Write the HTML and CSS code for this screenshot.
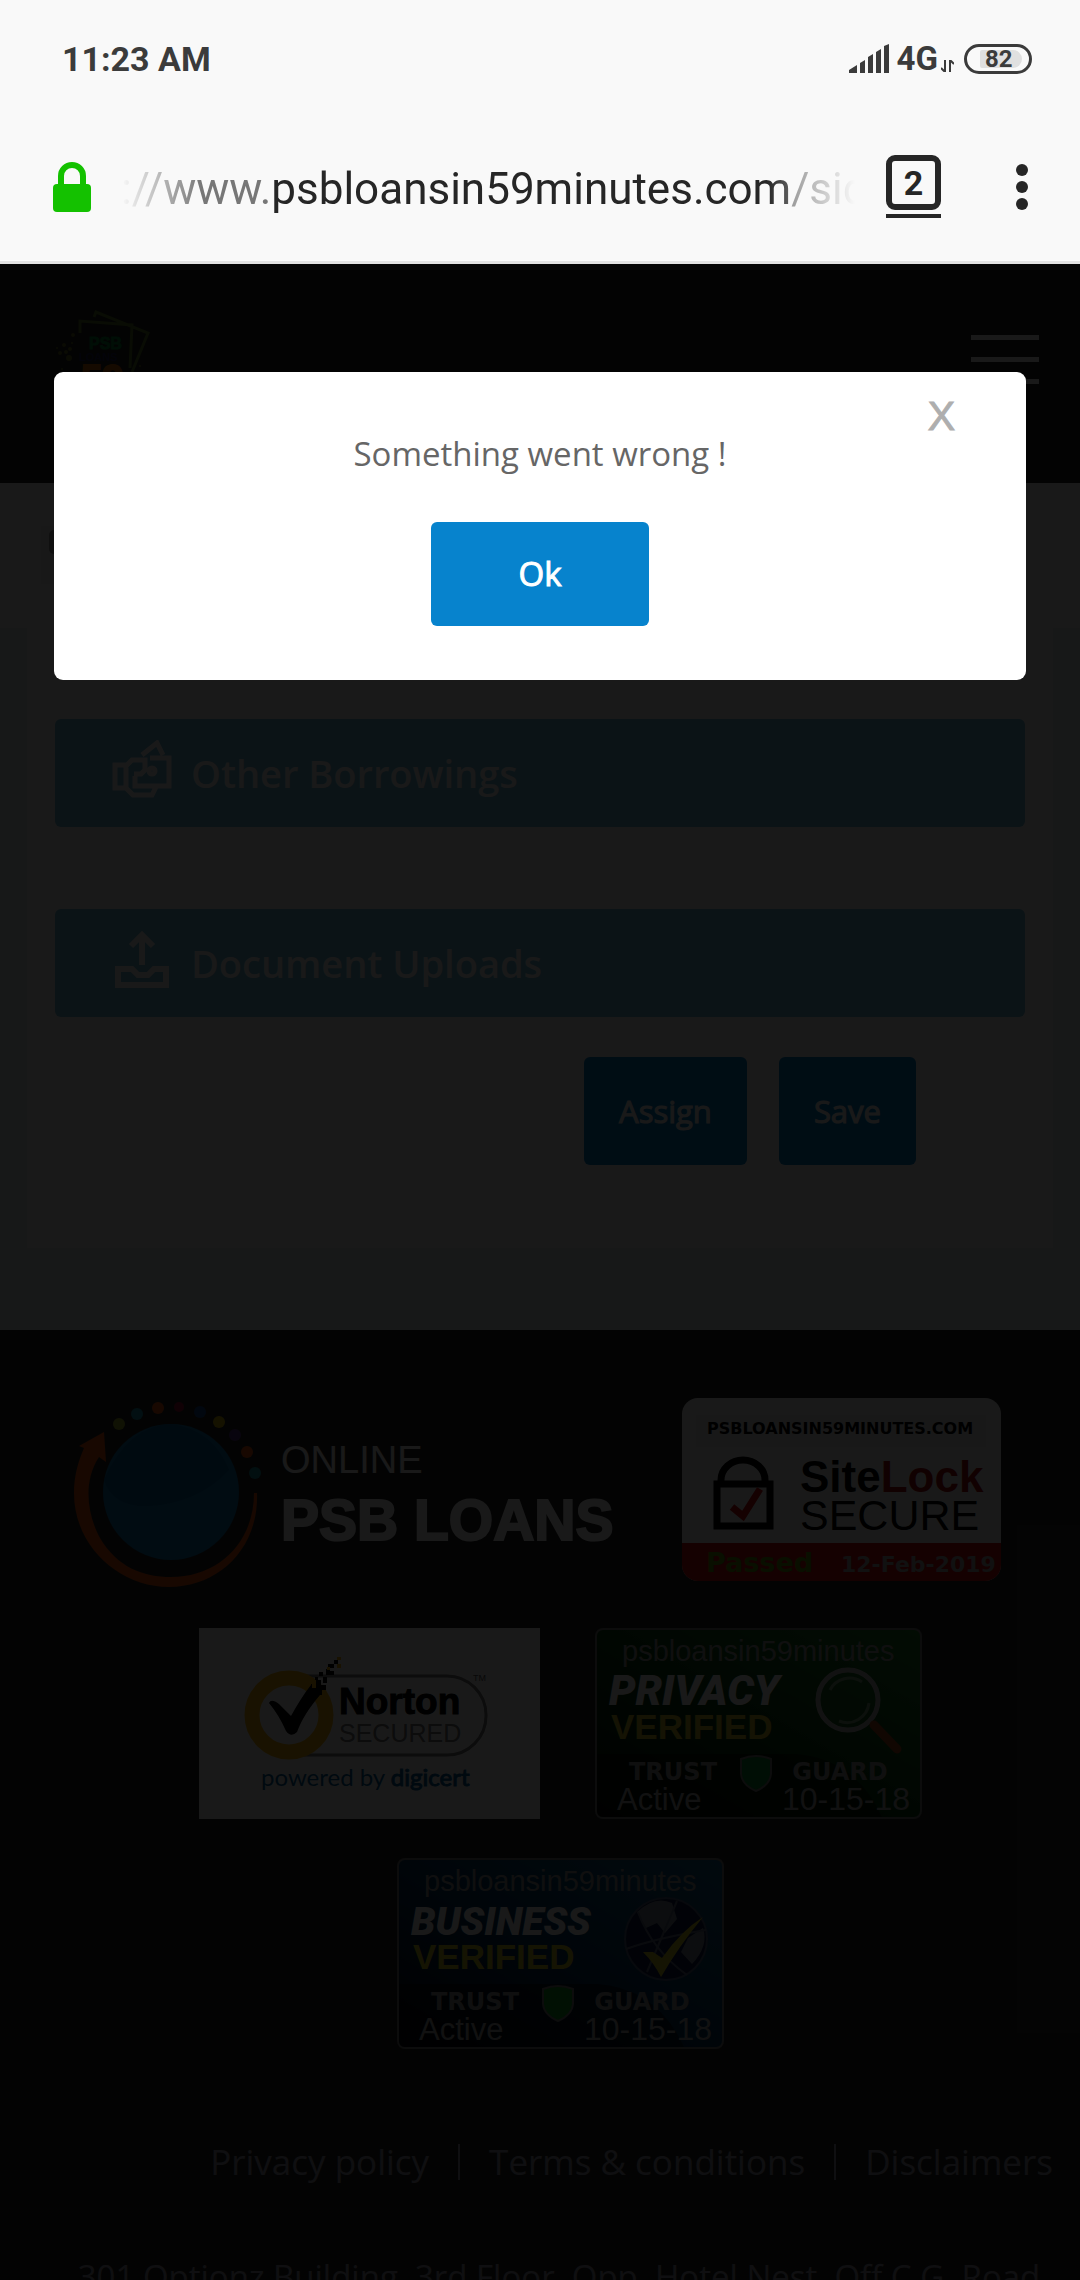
FILE: index.html
```html
<!DOCTYPE html>
<html lang="en">
<head>
<meta charset="utf-8">
<meta name="viewport" content="width=device-width, initial-scale=1">
<title>PSB Loans in 59 Minutes</title>
<link rel="stylesheet" href="styles.css">
</head>
<body>
<div class="shell">
  <div class="chrome">
    <div class="status">
      <span class="clock">11:23 AM</span>
      <div class="signals">
        <svg width="40" height="29" viewBox="0 0 40 29" fill="#3b3b3b" aria-hidden="true"><path d="M0 26L8 21V29H0zM11 19L16 16V29H11zM19 13L24 10V29H19zM27 8L32 5V29H27zM35 2L40 0V29H35z"/></svg>
        <span class="network">4G</span>
        <svg class="traffic" width="13" height="12" viewBox="0 0 13 12" fill="none" stroke="#3b3b3b" stroke-width="2" aria-hidden="true"><path d="M4 0V12L0 8M9 12V0L13 4"/></svg>
        <span class="battery"><span class="charge">82</span></span>
      </div>
    </div>
    <div class="toolbar">
      <svg width="38" height="50" viewBox="0 0 38 50" aria-label="Secure connection"><rect y="22" width="38" height="28" rx="4" fill="#14c100"/><path d="M8 24V14a11 11 0 0 1 22 0V24" fill="none" stroke="#14c100" stroke-width="6"/></svg>
      <div class="address"><span class="url"><i>://www.</i>psbloansin59minutes.com<i>/sid</i></span></div>
      <button class="tabs" type="button" aria-label="Open tabs"><span class="tab-count">2</span></button>
      <button class="more" type="button" aria-label="Menu"><span></span><span></span><span></span></button>
    </div>
  </div>

  <div class="page">
    <header class="site-header">
      <svg width="100" height="110" viewBox="0 0 100 110" aria-label="PSB Loans in 59 minutes">
        <g fill="none" stroke="#5a7a2a" stroke-width="3"><path d="M42 7L44 2 96 23 80 62M28 23V11L80 15 78 58"/></g>
        <g fill="#6b7020"><circle cx="21" cy="25" r="2"/><circle cx="12" cy="35" r="2"/><circle cx="18" cy="39" r="2"/><circle cx="8" cy="43" r="2"/><circle cx="17" cy="48" r="3"/><circle cx="14" cy="42" r="2"/><circle cx="10" cy="59" r="1"/><circle cx="88" cy="56" r="1"/><circle cx="5" cy="38" r="1"/><circle cx="20" cy="33" r="1"/></g>
        <text class="heavy" x="37" y="39" font-size="16" fill="#008a3c" stroke="#008a3c">PSB</text>
        <text class="heavy" x="27" y="51" font-size="11" fill="#202060">LOANS</text>
        <text class="heavy" x="29" y="82" font-size="38" fill="#d86a00" stroke="#d86a00" stroke-width="2">59</text>
      </svg>
      <button class="burger" type="button" aria-label="Navigation"><span></span><span></span><span></span></button>
    </header>
    <div class="title-bar"><div class="title-icon"><span></span></div></div>
    <main class="content">
      <section class="card">
        <a class="section" href="#borrowings">
          <svg width="60" height="58" viewBox="0 0 60 58" fill="none" stroke="#fff" stroke-width="5" aria-hidden="true"><path d="M30 15L45 3 51 15M38 18H57V46H23V36M3 25H14V48H3zM14 26L20 20H33V30L29 34H22M14 48L21 55H40L44 47"/><circle cx="40" cy="31" r="3"/></svg>
          <span>Other Borrowings</span>
        </a>
        <a class="section" href="#uploads">
          <svg width="60" height="58" viewBox="0 0 60 58" fill="none" stroke="#fff" stroke-width="6" aria-hidden="true"><path d="M30 35V5M19 16L30 5 41 16M6 39H20L26 45H36L42 39H54V55H6z"/></svg>
          <span>Document Uploads</span>
        </a>
        <div class="actions">
          <button type="button">Assign</button>
          <button type="button">Save</button>
        </div>
      </section>
    </main>
    <footer class="site-footer">
      <div class="badges">
        <div class="badge-row badge-row-first">
          <svg width="559" height="191" viewBox="0 0 559 191" aria-label="Online PSB Loans">
            <circle cx="103" cy="94" r="68" fill="#0b78b5"/>
            <path d="M36 82Q45 109 80 108Q130 105 161 72Q145 32 103 26Q60 28 36 82" fill="#07528f" opacity=".5"/>
            <path d="M11 48L36 34 38 64 31 59C14 85 20 118 32 140C49 169 75 179 103 179C150 179 186 145 186 95H189C191 151 150 189 101 189C52 189 6 149 6 95C6 78 10 64 16 50Z" fill="#f0540e"/>
            <circle cx="51" cy="26" r="6" fill="#a7b52a"/><circle cx="69" cy="16" r="6" fill="#1499b5"/><circle cx="90" cy="10" r="6" fill="#f0540e"/><circle cx="111" cy="9" r="5" fill="#a01038"/><circle cx="132" cy="14" r="6" fill="#10489b"/><circle cx="151" cy="24" r="6" fill="#d7b800"/><circle cx="167" cy="37" r="6" fill="#54308c"/><circle cx="179" cy="54" r="6" fill="#f0540e"/><circle cx="187" cy="75" r="6" fill="#1499a5"/>
            <text class="plain" x="213" y="75" font-size="38" fill="#fff">ONLINE</text>
            <text class="heavy" x="213" y="142" font-size="57" fill="#fff" stroke="#fff" stroke-width="2">PSB LOANS</text>
          </svg>
          <svg width="319" height="183" viewBox="0 0 319 183" aria-label="SiteLock Secure">
            <rect width="319" height="183" rx="16" fill="#fff"/><rect x="14" y="17" width="290" height="32" fill="#eee"/>
            <path d="M0 145H319V167a16 16 0 0 1-16 16H16a16 16 0 0 1-16-16z" fill="#cf1010"/>
            <text class="wide" x="25" y="36" font-size="16" fill="#000">PSBLOANSIN59MINUTES.COM</text>
            <path d="M35 86H88V128H35zM39 84V82a22 20 0 0 1 44 0V84" fill="none" stroke="#000" stroke-width="7"/>
            <path d="M50 109L61 118 78 91" fill="none" stroke="#cf1010" stroke-width="7"/>
            <text class="heavy" x="118" y="94" font-size="44" fill="#000">Site<tspan fill="#b00c10">Lock</tspan></text>
            <text class="plain" x="118" y="132" font-size="43" fill="#000">SECURE</text>
            <text class="wide" x="24" y="174" font-size="27" fill="#5a9a00">Passed</text>
            <text class="wide" x="159" y="174" font-size="22" fill="#aaa">12-Feb-2019</text>
          </svg>
        </div>
        <div class="badge-row">
          <svg width="341" height="191" viewBox="0 0 341 191" aria-label="Norton Secured, powered by digicert">
            <rect width="341" height="191" fill="#fff"/>
            <rect x="50" y="48" width="237" height="79" rx="39" fill="none" stroke="#777" stroke-width="3"/>
            <circle cx="90" cy="87" r="37" fill="#fff" stroke="#fdb913" stroke-width="15"/>
            <path d="M70 75Q72 70 80 76L92 88C98 77 104 67 112 57L121 67C110 80 103 91 98 104Q92 110 87 103Q80 87 70 75Z" fill="#000"/>
            <path d="M112 56h5v-4h5v5h5v5h-4v5h-8v-5h-3zM120 44h4v4h-4zM127 41h4v6h-4zM124 49h4v6h-4zM129 36h6v4h-6zM135 32h4v4h-4zM131 43h4v4h-4zM116 49h3v3h-3z"/>
            <path d="M138 29h4v3h-4zM138 36h4v4h-4zM128 39h3v3h-3zM113 56h4v4h-4z" fill="#fdb913"/>
            <text class="heavy" x="140" y="86" font-size="37" fill="#000" stroke="#000" stroke-width="1">Norton</text>
            <text class="plain" x="140" y="114" font-size="25" fill="#777">SECURED</text>
            <text class="plain" x="274" y="53" font-size="9" fill="#555">TM</text>
            <text class="lato" x="62" y="158" font-size="24" fill="#00609c">powered by <tspan stroke="#00609c" stroke-width="1">digicert</tspan></text>
          </svg>
          <svg width="327" height="191" viewBox="0 0 327 191" aria-label="Privacy verified, Trust Guard">
            <defs><linearGradient id="green" x1="0" y1="1" x2="1" y2="0"><stop offset="0" stop-color="#020f04"/><stop offset=".5" stop-color="#084012"/><stop offset="1" stop-color="#1c7a26"/></linearGradient></defs>
            <rect x="1" y="1" width="325" height="189" rx="7" fill="url(#green)" stroke="#777" stroke-width="2"/>
            <path d="M2 126H200Q260 130 287 189H8Q2 189 2 183Z" fill="#000" opacity=".5"/>
            <text class="plain" x="27" y="33" font-size="29" fill="#999">psbloansin59minutes</text>
            <text class="slant" x="14" y="77" font-size="42" fill="#fff">PRIVACY</text>
            <text class="heavy" x="16" y="111" font-size="35" fill="#d0c428">VERIFIED</text>
            <circle cx="253" cy="72" r="30" fill="#257030" fill-opacity=".4" stroke="#bbb" stroke-width="5"/><path d="M235 62a22 22 0 0 1 32-8M274 75a22 22 0 0 1-30 18" fill="none" stroke="#79a07b" stroke-width="3"/><path d="M279 97L302 121" stroke="#a84616" stroke-width="9" stroke-linecap="round"/>
            <text class="wide" x="78" y="152" font-size="24" fill="#999" text-anchor="middle">TRUST</text><text class="wide" x="245" y="152" font-size="24" fill="#999" text-anchor="middle">GUARD</text>
            <path d="M146 131Q161 125 176 131V146Q175 157 161 163Q147 157 146 146Z" fill="#078a32" stroke="#777" stroke-width="2"/>
            <text class="plain" x="22" y="182" font-size="31" fill="#aaa">Active</text><text class="plain" x="187" y="182" font-size="32" fill="#aaa">10-15-18</text>
          </svg>
        </div>
        <div class="badge-row">
          <svg width="327" height="191" viewBox="0 0 327 191" aria-label="Business verified, Trust Guard">
            <defs><linearGradient id="blue" x1="0" y1="1" x2="1" y2="0"><stop offset="0" stop-color="#020713"/><stop offset=".5" stop-color="#033560"/><stop offset="1" stop-color="#10608c"/></linearGradient></defs>
            <rect x="1" y="1" width="325" height="189" rx="7" fill="url(#blue)" stroke="#777" stroke-width="2"/>
            <path d="M2 126H200Q260 130 287 189H8Q2 189 2 183Z" fill="#000" opacity=".5"/>
            <text class="plain" x="27" y="33" font-size="29" fill="#999">psbloansin59minutes</text>
            <text class="slant" x="14" y="77" font-size="39" fill="#fff">BUSINESS</text>
            <text class="heavy" x="16" y="111" font-size="35" fill="#d8cd20">VERIFIED</text>
            <circle cx="269" cy="81" r="41" fill="#101c48" stroke="#4a5a80" stroke-width="2"/><path d="M240 54Q258 37 275 45L280 61 268 75 260 65 249 70ZM291 80L306 70Q312 88 295 106L284 94Z" fill="#7c8799"/><path d="M229 91Q260 80 309 72M241 54Q255 92 290 117M250 114L280 43" fill="none" stroke="#606c88" stroke-width="2"/><path d="M246 94H256L265 100Q284 73 306 59Q282 88 264 119Q257 105 246 94Z" fill="#d8cd20"/>
            <text class="wide" x="78" y="152" font-size="24" fill="#999" text-anchor="middle">TRUST</text><text class="wide" x="245" y="152" font-size="24" fill="#999" text-anchor="middle">GUARD</text>
            <path d="M146 131Q161 125 176 131V146Q175 157 161 163Q147 157 146 146Z" fill="#0aa022" stroke="#777" stroke-width="2"/>
            <text class="plain" x="22" y="182" font-size="31" fill="#aaa">Active</text><text class="plain" x="187" y="182" font-size="32" fill="#aaa">10-15-18</text>
          </svg>
        </div>
      </div>
      <nav class="legal"><a href="#privacy">Privacy policy</a><a href="#terms">Terms &amp; conditions</a><a href="#disclaimers">Disclaimers</a></nav>
      <address>301 Optionz Building, 3rd Floor, Opp. Hotel Nest, Off C.G. Road</address>
    </footer>
    <div class="backdrop"></div>
    <div class="modal" role="alertdialog" aria-labelledby="message">
      <button class="close" type="button" aria-label="Close">X</button>
      <p id="message">Something went wrong !</p>
      <button class="ok" type="button">Ok</button>
    </div>
  </div>
</div>
</body>
</html>
```
FILE: styles.css
```css
* { box-sizing: border-box; }
body { margin: 0; font-family: "Open Sans", sans-serif; }
button { margin: 0; padding: 0; border: 0; background: none; font: inherit; }
a { color: inherit; text-decoration: none; }
svg { display: block; flex: none; }

.shell { display: flex; flex-direction: column; height: 100vh; overflow: hidden; }

/* Phone status bar and browser toolbar */
.chrome { flex: none; background: #f9f9f9; border-bottom: 3px solid #e2e2e2; font-family: Roboto, sans-serif; color: #262626; }
.status { display: flex; justify-content: space-between; align-items: center; height: 117px; padding: 0 48px 0 62px; color: #3b3b3b; font-weight: 700; }
.clock { font-size: 34px; line-height: 40px; }
.signals { display: flex; align-items: center; }
.network { margin-left: 8px; font-size: 33px; line-height: 32px; }
.traffic { margin: 14px 10px 0 3px; }
.battery { display: flex; width: 68px; height: 30px; padding: 3px 7px 3px 13px; border: 3px solid #3b3b3b; border-radius: 15px; }
.charge { flex: 1; padding-left: 5px; border-radius: 2px 9px 9px 2px; background: #e0e0e0; font-size: 24px; line-height: 18px; }
.toolbar { display: flex; align-items: center; height: 144px; padding: 0 52px 4px 53px; }
.address { flex: 1; min-width: 0; margin: 4px 31px 0 30px; overflow: hidden; font-size: 44px; line-height: 56px; -webkit-mask-image: linear-gradient(to right, transparent, #000 80px, #000 88%, transparent); mask-image: linear-gradient(to right, transparent, #000 80px, #000 88%, transparent); }
.url { white-space: nowrap; }
.url i { font-style: normal; color: #777; }
.tabs { margin-bottom: 2px; padding-bottom: 4px; border-bottom: 4px solid #262626; }
.tab-count { display: block; width: 55px; height: 55px; border: 6px solid #262626; border-radius: 9px; font-size: 34px; font-weight: 700; line-height: 44px; color: #262626; }
.more { display: flex; flex-direction: column; gap: 5px; margin-left: 75px; }
.more span { width: 12px; height: 12px; border-radius: 50%; background: #262626; }

/* Site */
.page { position: relative; flex: 1; overflow: hidden; background: #e6f5ee; color: #fff; }
.site-header { display: flex; justify-content: space-between; align-items: flex-start; height: 219px; padding: 46px 41px 0 52px; background: #1e1e1e; }
.burger { display: flex; flex-direction: column; gap: 17px; width: 68px; margin-top: 25px; }
.burger span { height: 5px; background: #fff; }
.title-bar { height: 145px; padding: 43px 41px; background: #fff; }
.title-icon { width: 58px; height: 58px; padding: 4px 8px; background: #f0f0f0; }
.title-icon span { display: block; width: 24px; height: 24px; border-radius: 5px; background: #999; }
.content { padding: 0 27px 82px; }
.card { display: flex; flex-direction: column; gap: 82px; padding: 91px 28px 83px; background: #fff; }
.section { display: flex; align-items: center; gap: 19px; height: 108px; padding: 0 57px; border-radius: 6px; background: #6ebedc; font-size: 38px; font-weight: 600; line-height: 52px; }
.section svg { margin-bottom: 8px; }
.actions { display: flex; justify-content: flex-end; gap: 32px; margin-top: -42px; padding-right: 109px; }
.actions button { height: 108px; padding: 0 35px; border-radius: 6px; background: #0783cd; color: #fff; font-size: 31px; -webkit-text-stroke: 1px #fff; }

.site-footer { padding: 68px 0 0; background: #262626; color: #9c9ca8; }
.badges { display: flex; flex-direction: column; gap: 39px; padding-left: 41px; }
.badge-row { display: flex; justify-content: center; gap: 55px; }
.badge-row-first { padding-right: 52px; }
.plain { font-family: "Liberation Sans", sans-serif; }
.heavy { font-family: "Liberation Sans", sans-serif; font-weight: 700; }
.wide { font-family: "DejaVu Sans", sans-serif; font-weight: 700; }
.slant { font-family: Roboto, sans-serif; font-weight: 900; font-style: italic; }
.lato { font-family: Lato, sans-serif; }
.legal { display: flex; justify-content: flex-end; margin-top: 95px; padding-right: 27px; font-size: 35px; line-height: 36px; }
.legal a + a { margin-left: 29px; padding-left: 29px; border-left: 2px solid #9c9ca8; }
address { margin-top: 72px; padding-left: 38px; text-align: center; font-size: 33px; font-style: normal; line-height: 50px; white-space: nowrap; }

.backdrop { position: absolute; inset: 0; background: rgba(0, 0, 0, 0.9); }
.modal { position: absolute; top: 108px; left: 54px; right: 54px; padding: 57px 0 54px; border-radius: 9px; background: #fff; text-align: center; color: #666; }
.modal p { margin: 0; font-size: 33px; line-height: 50px; }
.ok { width: 218px; height: 104px; margin-top: 43px; padding-bottom: 2px; border-radius: 6px; background: #0783cd; color: #fff; font-size: 33px; -webkit-text-stroke: 1px #fff; }
.close { position: absolute; top: 14px; right: 71px; color: #aeaeae; font-family: "Liberation Sans", sans-serif; font-size: 41px; line-height: 60px; -webkit-text-stroke: 1px #aeaeae; }
```
